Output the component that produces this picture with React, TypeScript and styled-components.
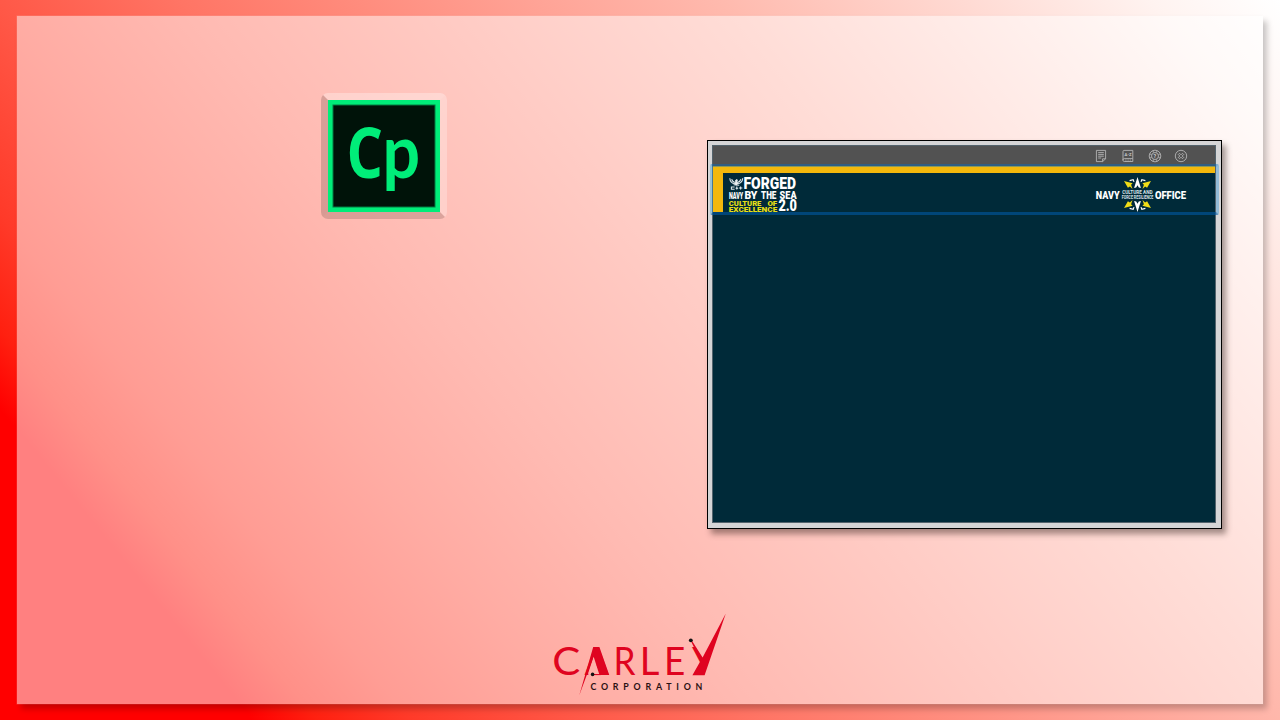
import React from "react";
import styled, { createGlobalStyle } from "styled-components";

const GlobalStyle = createGlobalStyle`
  * { box-sizing: border-box; }
  body { margin: 0; overflow: hidden; font-family: Lato, "Liberation Sans", sans-serif; }
`;

const Slide = styled.div`
  width: 1280px;
  height: 720px;
  padding: 16px 17px;
  background: linear-gradient(
    51deg,
    #ff0000 0%,
    #ff0000 13.5%,
    #ff2010 17%,
    #ff3a29 22%,
    #ff5847 31%,
    #ff7565 41%,
    #ff8b7c 50%,
    #ffa396 60%,
    #ffbaae 70%,
    #ffdad3 83%,
    #fff3f0 93%,
    #ffffff 100%
  );
`;

const Panel = styled.main`
  display: flex;
  flex-direction: column;
  align-items: center;
  width: 1246px;
  height: 688px;
  background: rgba(255, 255, 255, 0.5);
  box-shadow: 4px 5px 6px rgba(0, 0, 0, 0.22), 0 0 0 0.5px rgba(255, 255, 255, 0.2);
`;

const Stage = styled.section`
  display: flex;
  justify-content: space-between;
  align-items: flex-start;
  width: 100%;
  height: 594px;
  padding: 77px 41px 0 304px;
`;

const CaptivateTile = styled.div`
  width: 126px;
  height: 126px;
  border: 7px solid;
  border-color: rgba(255, 255, 255, 0.3) rgba(255, 255, 255, 0.25) rgba(80, 55, 50, 0.2) rgba(80, 55, 50, 0.22);
  border-radius: 7px;
  svg { display: block; }
`;

const CourseWindow = styled.article`
  position: relative;
  width: 515px;
  height: 389px;
  padding: 5px;
  margin-top: 47px;
  border: 1px solid #000;
  background: #d5d5d6;
  box-shadow: 4px 5px 6px rgba(35, 20, 15, 0.42);
`;

const CourseContent = styled.div`
  display: flex;
  flex-direction: column;
  width: 502px;
  height: 376px;
  background: #002a39;
  box-shadow: 0 0 0 1px #54636c;
`;

const Toolbar = styled.header`
  display: flex;
  justify-content: flex-end;
  align-items: center;
  gap: 12.6px;
  height: 20px;
  padding-right: 26.8px;
  background: #525252;
`;

const Icon = styled.svg`
  display: block;
  width: 14px;
  height: 14px;
  fill: none;
  stroke: #b4b4b4;
  stroke-width: 0.9;
`;

const Banner = styled.div`
  display: flex;
  justify-content: space-between;
  height: 46px;
  padding: 0 27px 0 5px;
  border-top: 7px solid #f3b80c;
  border-left: 10px solid #f3b80c;
  svg { display: block; overflow: visible; }
`;

const Selection = styled.div`
  position: absolute;
  left: 2px;
  top: 23px;
  width: 509px;
  height: 51px;
  border: 3px solid rgba(0, 112, 200, 0.34);
  border-top-color: rgba(0, 112, 200, 0.42);
  border-bottom-color: rgba(0, 90, 165, 0.6);
  border-left-color: rgba(50, 160, 215, 0.38);
  border-right-color: rgba(50, 150, 215, 0.4);
  border-radius: 2px;
`;

const Word = styled.text<{ $weight?: number; $size: number; $font?: string }>`
  font-family: ${(p) => p.$font ?? "Roboto"}, "Liberation Sans", sans-serif;
  font-size: ${(p) => p.$size}px;
  font-weight: ${(p) => p.$weight ?? 900};
`;

type FitProps = {
  x: number;
  y: number;
  width: number;
  size: number;
  fill: string;
  weight?: number;
  font?: string;
  clip?: string;
  children: string;
};

const Fit = ({ x, y, width, size, fill, weight, font, clip, children }: FitProps) => (
  <Word
    x={x}
    y={y}
    textLength={width}
    lengthAdjust="spacingAndGlyphs"
    clipPath={clip}
    $size={size}
    $weight={weight}
    $font={font}
    fill={fill}
  >
    {children}
  </Word>
);

const CaptivateLogo = () => (
  <svg width="112" height="112" viewBox="328 100 112 112">
    <rect x="328" y="100" width="112" height="112" fill="#00ed79" />
    <rect x="332.5" y="104.5" width="103" height="103" fill="#027c42" />
    <rect x="333.5" y="105.5" width="101" height="101" fill="#001309" />
    <Fit x={346.4} y={178.3} width={36.5} size={70} weight={700} font='"Open Sans"' fill="#00ed79">C</Fit>
    <Fit x={382.6} y={178} width={37.6} size={74} weight={700} font="Lato" fill="#00ed79">p</Fit>
  </svg>
);

const NotesIcon = () => (
  <Icon viewBox="0 0 14 14">
    <path d="M2.4 1.4h9.2v8.4l-3 2.8H2.4zM11.6 9.8h-3v2.8M4.2 3.6h5.6M4.2 5.4h5.6M4.2 7.2h5.6M4.2 9h3" />
  </Icon>
);

const GlossaryIcon = () => (
  <Icon viewBox="0 0 14 14">
    <path d="M3 1.4h8.8v8.2H3.2c-1.8 0-1.8 2.9 0 2.9h8.6V9.6M2 11V2.5c0-.6.4-1.1 1-1.1M4.4 11h1M6.6 11h1M8.8 11h1" />
    <Word x="3.6" y="6.9" $size={4.2} $weight={700} fill="#d0d0d0" stroke="none">A-Z</Word>
  </Icon>
);

const HelpIcon = () => (
  <Icon viewBox="0 0 14 14">
    <circle cx="7" cy="7" r="5.8" />
    <circle cx="7" cy="7" r="3.5" />
    <path d="M4.8 1.8l.9 1.8M9.2 1.8l-.9 1.8M4.8 12.2l.9-1.8M9.2 12.2l-.9-1.8M1.8 4.8l1.8.9M1.8 9.2l1.8-.9M12.2 4.8l-1.8.9M12.2 9.2l-1.8-.9" />
    <Word x="5.6" y="9" $size={5.4} $weight={700} fill="#d0d0d0" stroke="none">?</Word>
  </Icon>
);

const CloseIcon = () => (
  <Icon viewBox="0 0 14 14">
    <circle cx="7" cy="7" r="5.7" />
    <path d="M4.3 5.5l1.2-1.2L7 5.8l1.5-1.5 1.2 1.2L8.2 7l1.5 1.5-1.2 1.2L7 8.2 5.5 9.7 4.3 8.5 5.8 7z" strokeWidth="0.9" />
  </Icon>
);

const ForgedLogo = () => (
  <svg width="70" height="38" viewBox="728 173 70 38">
    <g stroke="#dfe7ea" fill="none" strokeWidth="1.1">
      <path d="M729.8 178.2c.3 3.4 2.2 5 4.6 5.5M731.6 179.2c.6 1.6 1.6 2.6 3.2 3.3M742.7 178.2c-.3 3.4-2.2 5-4.6 5.5M740.9 179.2c-.6 1.6-1.6 2.6-3.2 3.3" />
      <path d="M734.6 187h-3.2v2.2h3.2M736.8 186.6v2.8M735.6 188.2h2.6M740.6 186.4v3M739 188h3.4M733.6 184.8l5.6.4" />
    </g>
    <path d="M735 180.4l1.7-1.3 1.2 1-.5 1.4 1 2.3-2.2 1.6-2.3-1.6 1.4-1.8z" fill="#e9eef0" />
    <Fit x={743.5} y={189.1} width={52.6} size={16} fill="#fff">FORGED</Fit>
    <Fit x={729} y={198.9} width={14.2} size={9.6} fill="#fff">NAVY</Fit>
    <Fit x={744.4} y={199} width={13} size={10.6} fill="#fff">BY</Fit>
    <Fit x={761} y={199} width={15.4} size={10.6} fill="#fff">THE</Fit>
    <Fit x={779.6} y={199} width={17} size={10.6} fill="#fff">SEA</Fit>
    <Fit x={728.8} y={205.8} width={32.6} size={7.6} fill="#e7df16">CULTURE</Fit>
    <Fit x={767.4} y={205.8} width={9.8} size={7.6} fill="#e7df16">OF</Fit>
    <Fit x={728.8} y={211.8} width={48.4} size={7.2} fill="#e7df16">EXCELLENCE</Fit>
    <Fit x={778.4} y={211.4} width={18.6} size={16} fill="#fff">2.0</Fit>
  </svg>
);

const OfficeLogo = () => (
  <svg width="94" height="38" viewBox="1094 173 94 38">
    <Fit x={1095.8} y={198.7} width={23.8} size={11.2} fill="#fff">NAVY</Fit>
    <Fit x={1154.9} y={198.7} width={31.2} size={11.2} fill="#fff">OFFICE</Fit>
    <Fit x={1122.2} y={193.8} width={30.4} size={4.8} weight={700} fill="#dce4e7">CULTURE AND</Fit>
    <Fit x={1121.8} y={198.7} width={31.6} size={4.8} weight={700} fill="#dce4e7">FORCE RESILIENCE</Fit>
    {["", "translate(0 389) scale(1 -1)"].map((flip) => (
      <g key={flip} transform={flip}>
        <path d="M1137.5 177l3.4 11-2.1-.6-1.3-2.2-1.3 2.2-2.1.6z" fill="#fff" />
        <path d="M1124 181l8.6 2.2-1.5 1.5 1.4 4.3-2.6-2.4-2 1.2zM1151 181l-8.6 2.2 1.5 1.5-1.4 4.3 2.6-2.4 2 1.2z" fill="#f0dd17" />
        <path d="M1129.6 180.6l3.6-.9.8 2.2M1145.4 180.6l-3.6-.9-.8 2.2" fill="none" stroke="#fff" strokeWidth="1.1" />
      </g>
    ))}
  </svg>
);

const RED = "#df0420";

const CarleyLogo = () => (
  <svg width="180" height="90" viewBox="550 610 180 90">
    <clipPath id="open-a">
      <path clipRule="evenodd" d="M580 640h32v36h-32zM593.8 656l5.6 17.8h-11.4z" />
    </clipPath>
    <Fit x={552.2} y={675} width={28} size={39.4} weight={400} font="Lato" fill={RED}>C</Fit>
    <Fit x={584.5} y={675} width={24.5} size={39.2} weight={400} font="Lato" fill={RED} clip="url(#open-a)">A</Fit>
    <Fit x={613.5} y={675} width={22} size={39.2} weight={400} font="Lato" fill={RED}>R</Fit>
    <Fit x={639.8} y={675} width={19.6} size={39.2} weight={400} font="Lato" fill={RED}>L</Fit>
    <Fit x={664} y={675} width={21.3} size={39.2} weight={400} font="Lato" fill={RED}>E</Fit>
    <Fit x={692} y={675} width={21} size={39.2} weight={400} font="Lato" fill={RED}>Y</Fit>
    <g fill={RED}>
      <path d="M593.2 647h6.2l9.8 28h-9.7l-5.9-18.5L579.2 695.6z" />
      <path d="M592.8 674h8v1.1h-8z" />
      <path d="M725.8 613.5L704.6 675.2h-12.2l8.2-14.4-10-20.4.9-.3 11.1 17.5z" />
    </g>
    <circle cx="592.6" cy="674.4" r="1.8" fill="#111" />
    <circle cx="690.8" cy="640.3" r="1.9" fill="#111" />
    <Word x="590.4" y="689.7" textLength="112" lengthAdjust="spacing" $size={8.8} $weight={700} $font="Lato" fill="#2a1012">
      CORPORATION
    </Word>
  </svg>
);

export default function App() {
  return (
    <>
      <GlobalStyle />
      <Slide>
        <Panel>
          <Stage>
            <CaptivateTile>
              <CaptivateLogo />
            </CaptivateTile>
            <CourseWindow>
              <CourseContent>
                <Toolbar>
                  <NotesIcon />
                  <GlossaryIcon />
                  <HelpIcon />
                  <CloseIcon />
                </Toolbar>
                <Banner>
                  <ForgedLogo />
                  <OfficeLogo />
                </Banner>
              </CourseContent>
              <Selection />
            </CourseWindow>
          </Stage>
          <CarleyLogo />
        </Panel>
      </Slide>
    </>
  );
}
